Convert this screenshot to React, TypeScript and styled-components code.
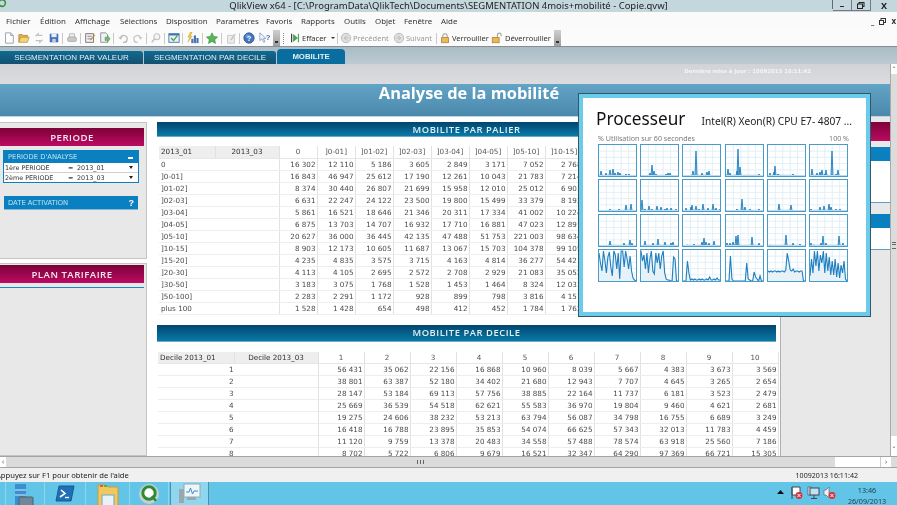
import React from "react";
import styled, { createGlobalStyle } from "styled-components";

const Global = createGlobalStyle`
  html, body { margin: 0; padding: 0; background: #fff; overflow: hidden; }
`;

const Page = styled.div`
  position: relative; width: 897px; height: 505px; overflow: hidden;
  display: flex; flex-direction: column; background: #fff; filter: blur(0.4px);
  font-family: "Noto Sans", "DejaVu Sans", sans-serif; color: #222;
`;
const TitleBar = styled.div`
  position: relative; flex: 0 0 12px; height: 12px; background: #c3d7dd; display: flex; justify-content: center;
  align-items: center; font-size: 9.47px; line-height: 12px; color: #222; white-space: nowrap;
`;
const TitleLogo = styled.svg`position: absolute; left: 0; top: 0;`;
const WindowButtons = styled.div`
  position: absolute; right: 0; top: 0; height: 9px; display: flex; border-left: 1px solid #667;
`;
const WinBtn = styled.div<{ $w: number }>`
  width: ${p => p.$w}px; height: 10px; border-right: 1px solid #778; border-bottom: 1px solid #778;
  display: flex; align-items: center; justify-content: center; font-size: 9px; font-weight: 700; line-height: 9px; color: #222;
  &:last-child { border: 0; }
`;
const MenuBar = styled.div`
  position: relative; flex: 0 0 18px; height: 18px; background: #fafafa; display: flex; align-items: center; padding-left: 6px;
  font-size: 7.9px; color: #333; box-sizing: border-box;
`;
const MenuItem = styled.div<{ $w: number }>`width: ${p => p.$w}px; white-space: nowrap;`;
const DocButtons = styled.div`
  position: absolute; right: 1px; top: 5px; display: flex; align-items: center; gap: 5px; font-size: 8px; line-height: 8px; font-weight: 700; color: #333;
`;
const ToolBar = styled.div`
  flex: 0 0 17px; height: 17px; box-sizing: border-box; background: #fbfbfb; border-bottom: 1px solid #8d8d8d;
  display: flex; align-items: center; padding-left: 1px; font-size: 7.5px; color: #444; white-space: nowrap;
`;
const ToolSlot = styled.div<{ $w?: number }>`
  width: ${p => p.$w ?? 15}px; height: 14px; display: flex; align-items: center; justify-content: center; flex: none;
  svg { width: 12px; height: 12px; opacity: 0.88; }
`;
const ToolSep = styled.div`width: 1px; height: 11px; margin: 0 1px; background: #c9c9c9; flex: none;`;
const Overflow = styled.div`
  width: 7px; height: 16px; flex: none; background: linear-gradient(#cfcfcf, #9d9d9d); position: relative;
  &::after { content: ""; position: absolute; left: 2px; bottom: 3px; width: 3px; height: 2px; background: #333; }
`;
const Grip = styled.div`
  width: 1px; height: 11px; margin: 0 3px; flex: none; border-left: 1px dotted #888;
`;
const ToolText = styled.span<{ $off?: boolean; $w: number }>`
  display: flex; align-items: center; width: ${p => p.$w}px; color: ${p => (p.$off ? "#9a9a9a" : "#333")}; flex: none;
`;
const ToolCaret = styled.span`
  width: 0; height: 0; margin-left: 5px; border-left: 2px solid transparent; border-right: 2px solid transparent; border-top: 2.5px solid #333;
`;
const TabStrip = styled.div`
  flex: 0 0 17px; height: 17px; box-sizing: border-box; background: linear-gradient(#a9bcc6, #bccad2); display: flex; align-items: flex-end;
`;
const Tab = styled.div<{ $w: number; $on?: boolean }>`
  width: ${p => p.$w}px; height: ${p => (p.$on ? 15 : 13)}px; display: flex; align-items: center; justify-content: center; flex: none;
  font-family: "Liberation Sans", sans-serif; font-size: ${p => (p.$on ? 7.8 : 8)}px; white-space: nowrap; box-sizing: border-box;
  font-weight: ${p => (p.$on ? 700 : 400)}; color: #dfeef5;
  border-radius: ${p => (p.$on ? "4px 4px 0 0" : "0 3px 0 0")};
  background: ${p => (p.$on ? "#0a6d9f" : "linear-gradient(#0f6b92, #14506f)")};
  margin-right: ${p => (p.$on ? 0 : 1)}px;
`;
const Workspace = styled.div`flex: 1; min-height: 0; display: flex;`;
const Content = styled.div`flex: 1; min-width: 0; display: flex; flex-direction: column;`;
const GrayBand = styled.div`
  flex: 0 0 20px; box-sizing: border-box; background: linear-gradient(#d2d3d7, #dcdcdf); display: flex; align-items: center; justify-content: flex-end;
  padding: 0 79px 6px 0; font-size: 5.4px; line-height: 8px; font-weight: 700; color: #f5f5f5; white-space: nowrap; font-family: "DejaVu Sans", sans-serif;
`;
const Banner = styled.div`
  flex: 0 0 33px; height: 33px; box-sizing: border-box; background: linear-gradient(#62a4c6, #4b89ac); border-bottom: 1px solid #b9d5e2;
  display: flex; align-items: flex-start; justify-content: center; padding: 0 0 0 48px;
  color: #fff; font-size: 16.4px; line-height: 18px; font-weight: 700; font-family: "Open Sans", sans-serif;
`;
const Main = styled.div`flex: 1; min-height: 0; display: flex; overflow: hidden; background: #fff;`;
const Sidebar = styled.div`
  flex: 0 0 147px; padding-top: 5px; display: flex; flex-direction: column; gap: 4px; box-sizing: border-box;
`;
const SidePanel = styled.div<{ $h: string; $top: number }>`
  height: ${p => p.$h}; flex: ${p => (p.$h === "auto" ? 1 : "none")}; background: #e8e8e8; border: 1px solid #c4c4c4; border-left: 0;
  box-sizing: border-box; padding: ${p => p.$top}px 2px 0 0;
`;
const PinkHead = styled.div<{ $h: number }>`
  height: ${p => p.$h}px; background: linear-gradient(#7d0238, #bc0a62); color: #f8e7ef; font-size: 9.6px; font-weight: 600;
  display: flex; align-items: center; justify-content: center; letter-spacing: 0.5px; font-family: "Open Sans", sans-serif;
`;
const BlueLine = styled.div`height: 1px; margin-top: 4px; background: #1b87c3;`;
const Selector = styled.div`margin: 4px 5px 0 3px; border: 1px solid #0a80c0; border-top: 0; background: #fff; box-sizing: border-box;`;
const BlueBar = styled.div`
  height: 13px; background: #0a80c0; color: #bfe1f2; display: flex; align-items: center; justify-content: space-between;
  padding: 0 4px 0 4px; font-size: 6.8px; font-family: "DejaVu Sans", sans-serif;
`;
const Dash = styled.span`width: 5px; height: 1.5px; background: #fff; margin: 3px 1px 0 0;`;
const Help = styled.span`color: #fff; font-size: 9px; font-weight: 700; font-family: "Liberation Sans", sans-serif;`;
const SelectorRow = styled.div`
  height: 10px; box-sizing: border-box; display: grid; grid-template-columns: 63px 9px 1fr 9px; align-items: center; padding-left: 1px;
  font-size: 6.4px; color: #333; border-bottom: 1px solid #cfcfcf; font-family: "DejaVu Sans", sans-serif; white-space: nowrap;
  &:last-child { border-bottom: 0; height: 9px; }
`;
const Caret = styled.span`
  width: 0; height: 0; border-left: 2.5px solid transparent; border-right: 2.5px solid transparent; border-top: 3px solid #222;
`;
const DateBar = styled(BlueBar)`margin: 13px 6px 0 4px; box-shadow: 0 1px 0 #7fb8d8;`;
const Center = styled.div`
  flex: 0 0 634px; min-width: 0; box-sizing: border-box; padding: 5px 5px 0 10px; background: #fff; border-right: 1px solid #aeb0b2;
`;
const SectionHead = styled.div<{ $h: number; $mt?: number }>`
  height: ${p => p.$h}px; margin: ${p => p.$mt ?? 0}px -1px 0 0; background: linear-gradient(#00456d, #0a7aa8); color: #dff0f7;
  display: flex; align-items: center; justify-content: center; font-size: 9.4px; font-weight: 600; letter-spacing: 0.55px;
  font-family: "Open Sans", sans-serif; border-bottom: 1px solid #6ba9c6; box-sizing: border-box;
`;
const TableWrap = styled.div<{ $left: number; $mt: number }>`
  margin: ${p => p.$mt}px 0 0 ${p => p.$left}px;
`;
const DataTable = styled.table<{ $w: number }>`
  width: ${p => p.$w}px; table-layout: fixed; border-collapse: collapse; font-family: "DejaVu Sans", sans-serif;
  font-size: 7.2px; color: #4a4a4a;
`;
const Th = styled.th<{ $dim?: boolean; $left?: boolean }>`
  height: 12px; padding: 0 2px; font-weight: 400; font-size: 7.2px; line-height: 11px; text-align: ${p => (p.$left ? "left" : "center")};
  color: ${p => (p.$dim ? "#2e2e2e" : "#555")};
  background: ${p => (p.$dim ? "#eeeeee" : "#fff")}; border-right: 1px solid #e2e2e2; border-bottom: 1px solid #e6e6e6; white-space: nowrap; overflow: hidden;
  box-sizing: border-box;
`;
const Td = styled.td<{ $label?: boolean; $merged?: boolean }>`
  height: 12px; padding: 0 1px 0 2px; line-height: 11px; box-sizing: border-box; white-space: nowrap; overflow: hidden; color: #4a4a4a;
  text-align: ${p => (p.$label ? "left" : "right")}; border-bottom: 1px solid #eeeeee; border-right: 1px solid #e2e2e2;
  ${p => (p.$merged ? "text-align: right; padding-right: 84px;" : "")}
`;
const RightCol = styled.div`flex: 1; min-width: 0; padding-top: 5px; background: #e8e8e8; display: flex; flex-direction: column;`;
const RightPink = styled.div`height: 19px; background: linear-gradient(#7d0238, #bc0a62);`;
const RightBlue = styled.div<{ $mt: number }>`height: 14px; margin-top: ${p => p.$mt}px; background: #0a80c0;`;
const RightWhite = styled.div<{ $h: number }>`height: ${p => p.$h}px; background: #fff; border-bottom: 1px solid #5a9fc4;`;
const VScroll = styled.div`
  flex: 0 0 7px; box-sizing: border-box; border-left: 1px solid #aaa; background: #dcdcdc; display: flex; flex-direction: column; align-items: center;
`;
const ScrollCap = styled.div<{ $h: number }>`
  height: ${p => p.$h}px; width: 100%; background: #fff; flex: none; font-size: 6px; line-height: ${p => p.$h}px; text-align: center; color: #555; overflow: hidden;
`;
const ScrollThumb = styled.div`flex: 1; width: 100%; display: flex; align-items: center; justify-content: center; padding-bottom: 20px; box-sizing: border-box;`;
const GripH = styled.div`width: 4px; height: 5px; border-top: 1px solid #666; border-bottom: 1px solid #666; position: relative;
  &::after { content: ""; position: absolute; left: 0; right: 0; top: 1.5px; height: 1px; background: #666; }
`;
const HScroll = styled.div`
  flex: 0 0 12px; box-sizing: border-box; background: #dbdbdb; border-top: 1px solid #a4a4a4; border-bottom: 1px solid #a4a4a4; display: flex; align-items: stretch;
`;
const HEnd = styled.div`width: 6px; background: #fff; font-size: 7px; line-height: 10px; text-align: center; color: #555; flex: none;`;
const HThumb = styled.div`flex: 0 0 829px; display: flex; align-items: center; justify-content: center;`;
const GripV = styled.div`width: 5px; height: 4px; border-left: 1px solid #666; border-right: 1px solid #666; position: relative;
  &::after { content: ""; position: absolute; top: 0; bottom: 0; left: 1.5px; width: 1px; background: #666; }
`;
const HTrack = styled.div`flex: 0 0 45px; background: #fff;`;
const HArrow = styled.div`flex: 0 0 11px; background: #fff; border-left: 1px solid #ccc; font-size: 7px; line-height: 10px; text-align: center; color: #555; box-sizing: border-box;`;
const StatusBar = styled.div`
  flex: 0 0 14px; background: #f0f0f0; display: flex; align-items: center; justify-content: space-between; font-size: 7.6px; color: #222;
  padding: 0 39px 0 0; white-space: nowrap; font-family: "Noto Sans", sans-serif; overflow: hidden;
`;
const StatusHelp = styled.span`margin-left: -4px;`;
const StatusTime = styled.span`font-size: 7.1px;`;
const Taskbar = styled.div`
  flex: 0 0 23px; background: #62c5e8; display: flex; align-items: stretch; overflow: hidden; position: relative; padding-left: 5px;
`;
const TaskCell = styled.div<{ $w: number; $on?: boolean }>`
  width: ${p => p.$w}px; flex: none; box-sizing: border-box; display: flex; align-items: flex-start; justify-content: center; padding-top: 1px;
  border-left: 1px solid ${p => (p.$on ? "#4f8ea8" : "#8cd6ef")}; 
  ${p => (p.$on ? "background: #8fd6ef; border-right: 1px solid #4f8ea8;" : "")}
`;
const Tray = styled.div`
  margin-left: auto; display: flex; align-items: flex-start; padding: 3px 4px 0 0;
`;
const TrayIcon = styled.div`width: 16.5px; height: 14px; display: flex; justify-content: center; align-items: center; flex: none;`;
const Clock = styled.div`
  width: 52px; margin-left: 3px; text-align: center; font-size: 7.2px; line-height: 11px; color: #1e3a48; white-space: nowrap;
`;
const ClockLine = styled.div`height: 11px;`;

/* processor window */
const ProcWindow = styled.div`
  position: absolute; left: 578px; top: 93px; width: 293px; height: 224px; box-sizing: border-box;
  border: 1px solid #33566a; background: #fff; box-shadow: inset 0 0 0 4px #6bcbea; padding: 13px 21px 0 19px;
`;
const ProcHead = styled.div`display: flex; align-items: baseline; justify-content: space-between; height: 21px;`;
const ProcTitle = styled.div`font-size: 17.2px; color: #111; font-family: "Noto Sans", sans-serif; line-height: 24px; margin-left: -2px;`;
const ProcCpu = styled.div`font-size: 10.2px; color: #222; white-space: nowrap; font-family: "Noto Sans", sans-serif; margin-right: -3px;`;
const ProcCaption = styled.div`
  display: flex; justify-content: space-between; margin-top: 5px; height: 10px; line-height: 10px; font-size: 7.1px; color: #7a7a7a;
`;
const CpuGrid = styled.div`
  display: grid; grid-template-columns: repeat(6, 39px); grid-auto-rows: 33px; column-gap: 3.2px; row-gap: 2px; margin-top: 1px;
`;
const CpuBox = styled.svg`display: block; border: 1px solid #4a9bc8; box-sizing: border-box; width: 39px; height: 33px; background: #fff;`;

const palierHead = ["0", "]0-01]", "]01-02]", "]02-03]", "]03-04]", "]04-05]", "]05-10]", "]10-15]"];
const palier: [string, ...string[]][] = [
  ["0", "16 302", "12 110", "5 186", "3 605", "2 849", "3 171", "7 052", "2 768"],
  ["]0-01]", "16 843", "46 947", "25 612", "17 190", "12 261", "10 043", "21 783", "7 214"],
  ["]01-02]", "8 374", "30 440", "26 807", "21 699", "15 958", "12 010", "25 012", "6 903"],
  ["]02-03]", "6 631", "22 247", "24 122", "23 500", "19 800", "15 499", "33 379", "8 192"],
  ["]03-04]", "5 861", "16 521", "18 646", "21 346", "20 311", "17 334", "41 002", "10 224"],
  ["]04-05]", "6 875", "13 703", "14 707", "16 932", "17 710", "16 881", "47 023", "12 891"],
  ["]05-10]", "20 627", "36 000", "36 445", "42 135", "47 488", "51 753", "221 003", "98 634"],
  ["]10-15]", "8 903", "12 173", "10 605", "11 687", "13 067", "15 703", "104 378", "99 105"],
  ["]15-20]", "4 235", "4 835", "3 575", "3 715", "4 163", "4 814", "36 277", "54 421"],
  ["]20-30]", "4 113", "4 105", "2 695", "2 572", "2 708", "2 929", "21 083", "35 052"],
  ["]30-50]", "3 183", "3 075", "1 768", "1 528", "1 453", "1 464", "8 324", "12 033"],
  ["]50-100]", "2 283", "2 291", "1 172", "928", "899", "798", "3 816", "4 157"],
  ["plus 100", "1 528", "1 428", "654", "498", "412", "452", "1 784", "1 762"],
];
const decile: string[][] = [
  ["56 431", "35 062", "22 156", "16 868", "10 960", "8 039", "5 667", "4 383", "3 673", "3 569"],
  ["38 801", "63 387", "52 180", "34 402", "21 680", "12 943", "7 707", "4 645", "3 265", "2 654"],
  ["28 147", "53 184", "69 113", "57 756", "38 885", "22 164", "11 737", "6 181", "3 523", "2 479"],
  ["25 669", "36 539", "54 518", "62 621", "55 583", "36 970", "19 804", "9 460", "4 621", "2 681"],
  ["19 275", "24 606", "38 232", "53 213", "63 794", "56 087", "34 798", "16 755", "6 689", "3 249"],
  ["16 418", "16 788", "23 895", "35 853", "54 074", "66 625", "57 343", "32 013", "11 783", "4 459"],
  ["11 120", "9 759", "13 378", "20 483", "34 558", "57 488", "78 574", "63 918", "25 560", "7 186"],
  ["8 702", "5 722", "6 806", "9 679", "16 521", "32 347", "64 290", "97 369", "66 721", "15 305"],
];

const menus: [string, number][] = [
  ["Fichier", 34], ["Édition", 35], ["Affichage", 45], ["Sélections", 46], ["Disposition", 50], ["Paramètres", 50],
  ["Favoris", 35], ["Rapports", 43], ["Outils", 31], ["Objet", 29], ["Fenêtre", 37], ["Aide", 30],
];

type Spike = [number, number];
const spikes: Spike[][] = [
  [[2,5],[7,3],[11,6],[14,7],[16,3],[19,4],[21,3],[27,2],[30,2]],
  [[9,3],[11,11],[13,5],[15,2],[25,2],[27,3],[29,3]],
  [[10,5],[13,25],[19,3],[24,4],[26,5]],
  [[2,7],[4,3],[11,5],[12,27],[14,9],[33,2]],
  [[2,3],[6,4],[7,10],[10,2],[12,1],[25,2]],
  [[2,7],[7,3],[10,4],[12,6],[15,2],[16,6],[22,25],[26,2],[28,6]],
  [[11,2],[20,2],[27,6],[32,7]],
  [[1,11],[4,2],[8,5],[11,2],[16,5],[20,4],[24,2],[26,3],[30,3],[35,2]],
  [[3,3],[8,4],[9,6],[13,5],[16,2],[20,7],[25,3],[30,7],[33,3],[37,2]],
  [[11,2],[16,12],[19,4],[24,2],[33,2]],
  [[11,7],[23,6]],
  [[1,2],[10,4],[14,5],[19,7],[21,4],[26,2],[30,2]],
  [[11,5],[25,3],[31,6],[33,3]],
  [[4,5],[12,3],[17,7],[24,4],[30,3],[32,4]],
  [[4,1],[11,2],[19,4],[21,8],[23,4],[26,3],[31,5]],
  [[1,3],[4,3],[7,4],[10,10],[12,11],[26,9],[33,3]],
  [[2,1],[18,11],[25,3],[32,2]],
  [[1,3],[4,1],[11,3],[13,10],[16,3],[29,10],[33,3]],
];
const dense: number[][] = [
  [28,18,10,30,20,8,24,29,14,5,30,26,12,28,2,30,31,14,30,22,12,25,10,3,1,0],
  [30,20,26,12,28,8,22,30,10,7,28,18,28,12,25,30,8,2,1,1,0,0,24,22,0,0],
  [0,0,0,20,8,1,2,1,2,1,1,2,1,2,1,1,2,1,4,1,1,2,1,3,1,1],
  [0,0,0,25,2,0,0,0,0,0,0,0,0,0,18,2,1,0,0,9,4,2,0,5,0,0],
  [10,9,10,9,10,10,9,10,9,10,10,9,11,28,20,11,10,12,9,10,10,9,10,10,0,0],
  [5,22,8,30,15,31,10,26,18,30,8,28,10,24,6,20,6,22,4,18,3,16,8,20,2,0],
];

const H = 31;
function spikePoints(s: Spike[]) {
  const pts: string[] = [`0,${H}`];
  s.forEach(([x, h]) => pts.push(`${x - 1},${H - 0.6}`, `${x},${H - h}`, `${x + 1},${H - 0.6}`));
  pts.push(`37,${H}`);
  return pts.join(" ");
}
function densePoints(d: number[]) {
  return d.map((v, i) => `${(i * 37) / 25},${H - Math.min(v, 30)}`).join(" ");
}

function Grid() {
  const xs = [7.4, 14.8, 22.2, 29.6];
  const ys = [6.2, 12.4, 18.6, 24.8];
  return (
    <g stroke="#dcecf5" strokeWidth="0.8">
      {xs.map(x => <line key={x} x1={x} x2={x} y1={0} y2={H} />)}
      {ys.map(y => <line key={y} y1={y} y2={y} x1={0} x2={37} />)}
    </g>
  );
}
function CpuChart({ s, d }: { s?: Spike[]; d?: number[] }) {
  const pts = s ? spikePoints(s) : densePoints(d!);
  return (
    <CpuBox viewBox="0 0 37 31" preserveAspectRatio="none">
      <Grid />
      {s ? (
        <>
          <polygon points={pts} fill="#8cc4e4" stroke="none" />
          <polyline points={pts} fill="none" stroke="#1f7fc0" strokeWidth="0.9" />
          <rect x="0" y={H - 1} width="37" height="1" fill="#bcdcec" />
        </>
      ) : (
        <>
          <polygon points={`0,${H} ${pts} 37,${H}`} fill="#e6f1f8" />
          <polyline points={pts} fill="none" stroke="#1f7fc0" strokeWidth="1.1" />
        </>
      )}
    </CpuBox>
  );
}

function Ico({ k }: { k: string }) {
  const p = { width: 14, height: 14, viewBox: "0 0 14 14" };
  switch (k) {
    case "new": return <svg {...p}><path d="M3 1h6l3 3v9H3z" fill="#fff" stroke="#7c8b9a" /><path d="M9 1v3h3" fill="#dde" stroke="#7c8b9a" /></svg>;
    case "open": return <svg {...p}><path d="M1 12V3h4l1 1h5v2" fill="#e0ac3c" stroke="#a87a20" /><path d="M1 12l2-6h10l-2 6z" fill="#f4cf62" stroke="#a87a20" strokeWidth=".8" /></svg>;
    case "reload": return <svg {...p}><path d="M3 5l3-3v2h5M11 9l-3 3v-2H3" fill="none" stroke="#bbb" strokeWidth="1.5" /></svg>;
    case "save": return <svg {...p}><rect x="2" y="2" width="10" height="10" fill="#2f5fb0" /><rect x="4" y="2" width="6" height="4" fill="#e8eefc" /><rect x="5" y="8" width="4" height="4" fill="#bcd" /></svg>;
    case "print": return <svg {...p}><path d="M4 2h6v4H4z" fill="#eee" stroke="#aaa" /><rect x="2" y="6" width="10" height="5" rx="1" fill="#c2c2c2" stroke="#a0a0a0" /></svg>;
    case "edit": return <svg {...p}><rect x="2" y="2" width="9" height="10" fill="#f2f2ee" stroke="#556" /><path d="M4 5h5M4 8h5" stroke="#667" /><path d="M7 9l5-6 1 1-5 6z" fill="#c77a22" /></svg>;
    case "export": return <svg {...p}><path d="M2 1h6l2 2v9H2z" fill="#eef1ee" stroke="#778" /><path d="M7 6h3V4l3 4-3 4v-2H7z" fill="#5fae5a" stroke="#3c7f3a" strokeWidth=".5" /></svg>;
    case "undo": return <svg {...p}><path d="M4 7a4 4 0 1 1 3 5" fill="none" stroke="#b5b5b5" strokeWidth="1.6" /><path d="M1.5 6h5l-2.5 3z" fill="#b5b5b5" /></svg>;
    case "redo": return <svg {...p}><path d="M10 7a4 4 0 1 0-3 5" fill="none" stroke="#c4c4c4" strokeWidth="1.6" /><path d="M12.5 6h-5l2.5 3z" fill="#c4c4c4" /></svg>;
    case "search": return <svg {...p}><circle cx="8" cy="5.5" r="3.5" fill="#f4f4f4" stroke="#bbb" strokeWidth="1.2" /><path d="M5.5 8L2 12" stroke="#bbb" strokeWidth="1.8" /></svg>;
    case "check": return <svg {...p}><rect x="1" y="2" width="12" height="10" fill="#e9eef4" stroke="#2b5f9e" /><rect x="1" y="2" width="12" height="2" fill="#2b5f9e" /><path d="M3.5 7l3 3 4.5-6" fill="none" stroke="#2a9a3a" strokeWidth="1.6" /></svg>;
    case "chart": return <svg {...p}><rect x="5" y="8" width="2.5" height="5" fill="#2f62b0" /><rect x="8" y="4" width="2.5" height="9" fill="#2f62b0" /><rect x="11" y="7" width="2.5" height="6" fill="#2f62b0" /><path d="M4 0L1 6h2l-2 6 5-7H4l2-5z" fill="#f0c020" stroke="#a88510" strokeWidth=".4" /></svg>;
    case "star": return <svg {...p}><path d="M7 1l2 4.2 4.5.6-3.3 3.1.9 4.4L7 11.1l-4 2.2.8-4.4L.5 5.8 5 5.2z" fill="#3fae3c" stroke="#1d7a20" strokeWidth=".7" /></svg>;
    case "tools": return <svg {...p}><path d="M3 4h6l2 2v7H3z" fill="#ececec" stroke="#bbb" /><path d="M6 9l5-7 1.5 1-5 7z" fill="#bbb" /></svg>;
    case "help": return <svg {...p}><circle cx="7" cy="7" r="6" fill="#2a62b8" stroke="#15408a" /><circle cx="5.5" cy="5" r="2.5" fill="#6e9ce0" opacity=".7" /><text x="7" y="10.5" fontSize="9" fontWeight="700" fill="#fff" textAnchor="middle" fontFamily="Liberation Sans">?</text></svg>;
    case "what": return <svg {...p}><path d="M1 1v9l2.5-2 2 4 1.5-.8-2-3.7H8z" fill="#f2f7ff" stroke="#5a7ab0" strokeWidth=".8" /><text x="10.5" y="9" fontSize="9" fontWeight="700" fill="#2a62b8" textAnchor="middle" fontFamily="Liberation Sans">?</text></svg>;
    case "clear": return <svg {...p}><path d="M3 2v10" stroke="#222" strokeWidth="1.3" /><path d="M5 3l5 4-5 4z" fill="#2f9a42" stroke="#1b6c2a" strokeWidth=".6" /><path d="M11 2v10" stroke="#2f9a42" strokeWidth="1.3" /></svg>;
    case "back": return <svg {...p}><circle cx="7" cy="7" r="5.5" fill="#ddd" stroke="#aaa" /><path d="M8 4L5 7l3 3M5 7h5" fill="none" stroke="#aaa" /></svg>;
    case "next": return <svg {...p}><circle cx="7" cy="7" r="5.5" fill="#ddd" stroke="#aaa" /><path d="M6 4l3 3-3 3M9 7H4" fill="none" stroke="#aaa" /></svg>;
    case "lock": return <svg {...p}><path d="M4.5 7V4.5a2.5 2.5 0 0 1 5 0V7" fill="none" stroke="#9a9a9a" strokeWidth="1.3" /><rect x="3" y="6.5" width="8" height="6" fill="#e6b040" stroke="#a87a20" /></svg>;
    case "unlock": return <svg {...p}><path d="M7.5 6V3.5a2.2 2.2 0 0 1 4.4 0V5" fill="none" stroke="#9a9a9a" strokeWidth="1.3" /><rect x="1.5" y="6.5" width="8" height="6" fill="#e6b040" stroke="#a87a20" /></svg>;
    default: return null;
  }
}

function Tool({ k, w }: { k: string; w?: number }) {
  return <ToolSlot $w={w}><Ico k={k} /></ToolSlot>;
}

export default function App() {
  return (
    <Page>
      <Global />
      <TitleBar>
        <TitleLogo width="8" height="8" viewBox="0 0 8 8"><circle cx="2" cy="3" r="3.4" fill="none" stroke="#3e8f3e" strokeWidth="1.6" /></TitleLogo>
        QlikView x64 - [C:\ProgramData\QlikTech\Documents\SEGMENTATION 4mois+mobilité - Copie.qvw]
        <WindowButtons>
          <WinBtn $w={18}>–</WinBtn>
          <WinBtn $w={18}>
            <svg width="8" height="7" viewBox="0 0 8 7"><rect x="2" y="0.5" width="5" height="4" fill="none" stroke="#222" /><rect x="0.5" y="2" width="5" height="4.5" fill="#c3d7dd" stroke="#222" /></svg>
          </WinBtn>
          <WinBtn $w={26}>X</WinBtn>
        </WindowButtons>
      </TitleBar>
      <MenuBar>
        {menus.map(([m, w]) => <MenuItem key={m} $w={w}>{m}</MenuItem>)}
        <DocButtons>
          <span>_</span>
          <svg width="7" height="7" viewBox="0 0 7 7"><rect x="2" y="0.5" width="4.5" height="4" fill="none" stroke="#333" /><rect x="0.5" y="2.5" width="4" height="4" fill="#fafafa" stroke="#333" /></svg>
          <span>x</span>
        </DocButtons>
      </MenuBar>
      <ToolBar>
        <Tool k="new" /><Tool k="open" /><Tool k="reload" /><Tool k="save" /><ToolSep />
        <Tool k="print" /><ToolSep />
        <Tool k="edit" /><Tool k="export" /><ToolSep />
        <Tool k="undo" /><Tool k="redo" /><ToolSep />
        <Tool k="search" /><ToolSep />
        <Tool k="check" /><ToolSep />
        <Tool k="chart" w={17} /><ToolSep />
        <Tool k="star" w={16} /><ToolSep />
        <Tool k="tools" /><ToolSep />
        <Tool k="help" /><Tool k="what" w={17} />
        <Overflow />
        <Grip />
        <Tool k="clear" w={14} />
        <ToolText $w={34}>Effacer<ToolCaret /></ToolText>
        <ToolSep />
        <Tool k="back" w={14} />
        <ToolText $off $w={39}>Précédent</ToolText>
        <Tool k="next" w={14} />
        <ToolText $off $w={29}>Suivant</ToolText>
        <ToolSep />
        <Tool k="lock" w={14} />
        <ToolText $w={37}>Verrouiller</ToolText>
        <Tool k="unlock" w={16} />
        <ToolText $w={49}>Déverrouiller</ToolText>
        <Overflow />
      </ToolBar>
      <TabStrip>
        <Tab $w={143}>SEGMENTATION PAR VALEUR</Tab>
        <Tab $w={132}>SEGMENTATION PAR DECILE</Tab>
        <Tab $w={68} $on>MOBILITE</Tab>
      </TabStrip>
      <Workspace>
        <Content>
          <GrayBand>Dernière mise à jour : 10092013 16:11:42</GrayBand>
          <Banner>Analyse de la mobilité</Banner>
          <Main>
            <Sidebar>
              <SidePanel $h="137px" $top={5}>
                <PinkHead $h={18}>PERIODE</PinkHead>
                <Selector>
                  <BlueBar>PERIODE D'ANALYSE<Dash /></BlueBar>
                  <SelectorRow><span>1ère PERIODE</span><span>=</span><span>2013_01</span><Caret /></SelectorRow>
                  <SelectorRow><span>2ème PERIODE</span><span>=</span><span>2013_03</span><Caret /></SelectorRow>
                </Selector>
                <DateBar>DATE ACTIVATION<Help>?</Help></DateBar>
              </SidePanel>
              <SidePanel $h="auto" $top={1}>
                <PinkHead $h={18}>PLAN TARIFAIRE</PinkHead>
                <BlueLine />
              </SidePanel>
            </Sidebar>
            <Center>
              <SectionHead $h={15}>MOBILITE PAR PALIER</SectionHead>
              <TableWrap $left={2} $mt={9}>
                <DataTable $w={424}>
                  <colgroup>
                    <col style={{ width: 56 }} /><col style={{ width: 64 }} />
                    {palierHead.map(h => <col key={h} style={{ width: 38 }} />)}
                  </colgroup>
                  <thead>
                    <tr>
                      <Th $dim $left>2013_01</Th><Th $dim>2013_03</Th>
                      {palierHead.map(h => <Th key={h}>{h}</Th>)}
                    </tr>
                  </thead>
                  <tbody>
                    {palier.map(r => (
                      <tr key={r[0]}>
                        <Td $label colSpan={2}>{r[0]}</Td>
                        {r.slice(1).map((v, i) => <Td key={i}>{v}</Td>)}
                      </tr>
                    ))}
                  </tbody>
                </DataTable>
              </TableWrap>
              <SectionHead $h={17} $mt={10}>MOBILITE PAR DECILE</SectionHead>
              <TableWrap $left={1} $mt={10}>
                <DataTable $w={620}>
                  <colgroup>
                    <col style={{ width: 76 }} /><col style={{ width: 84 }} />
                    {decile[0].map((_, i) => <col key={i} style={{ width: 46 }} />)}
                  </colgroup>
                  <thead>
                    <tr>
                      <Th $dim $left>Decile 2013_01</Th><Th $dim>Decile 2013_03</Th>
                      {decile[0].map((_, i) => <Th key={i}>{i + 1}</Th>)}
                    </tr>
                  </thead>
                  <tbody>
                    {decile.map((r, i) => (
                      <tr key={i}>
                        <Td $merged colSpan={2}>{i + 1}</Td>
                        {r.map((v, j) => <Td key={j}>{v}</Td>)}
                      </tr>
                    ))}
                  </tbody>
                </DataTable>
              </TableWrap>
            </Center>
            <RightCol>
              <RightPink />
              <RightBlue $mt={6} />
              <RightWhite $h={41} />
              <RightBlue $mt={11} />
              <RightWhite $h={21} />
            </RightCol>
          </Main>
        </Content>
        <VScroll>
          <ScrollCap $h={10}>⌃</ScrollCap>
          <ScrollThumb><GripH /></ScrollThumb>
          <ScrollCap $h={20}>⌄</ScrollCap>
        </VScroll>
      </Workspace>
      <HScroll>
        <HEnd>‹</HEnd>
        <HThumb><GripV /></HThumb>
        <HTrack />
        <HArrow>›</HArrow>
      </HScroll>
      <StatusBar>
        <StatusHelp>Appuyez sur F1 pour obtenir de l'aide</StatusHelp>
        <StatusTime>10092013 16:11:42</StatusTime>
      </StatusBar>
      <Taskbar>
        <TaskCell $w={39}>
          <svg width="24" height="22" viewBox="0 0 24 22"><rect x="2" y="1" width="11" height="21" fill="#3a8fd0" /><path d="M2 7h11M2 12h11" stroke="#cfe8f8" /><rect x="6" y="14" width="14" height="9" rx="1" fill="#6f8796" stroke="#48606e" /></svg>
        </TaskCell>
        <TaskCell $w={41}>
          <svg width="20" height="18" viewBox="0 0 20 18" style={{ marginTop: 2 }}><path d="M4 1h15l-3 15H1z" fill="#1f6fb5" stroke="#155a96" /><path d="M6 5l4 3.5-5 3.5" fill="none" stroke="#fff" strokeWidth="1.6" /><path d="M10 12.5h4" stroke="#fff" strokeWidth="1.4" /></svg>
        </TaskCell>
        <TaskCell $w={44}>
          <svg width="22" height="22" viewBox="0 0 22 22"><path d="M1 2h8l2 2h10v20H1z" fill="#f0c85e" stroke="#c89c38" /><path d="M3 2h3v2H3z" fill="#e05a4a" /><path d="M7 2h3v2H7z" fill="#5ab04a" /><rect x="5" y="12" width="12" height="11" fill="#e8f2f8" stroke="#6fa7c8" /></svg>
        </TaskCell>
        <TaskCell $w={39}>
          <svg width="22" height="22" viewBox="0 0 22 22"><circle cx="11" cy="11" r="10" fill="#c8cfd0" /><circle cx="11" cy="10" r="6.2" fill="#fff" stroke="#2e8b36" strokeWidth="3" /><path d="M14 13l4 5" stroke="#2e8b36" strokeWidth="2.5" /></svg>
        </TaskCell>
        <TaskCell $w={2}>{null}</TaskCell>
        <TaskCell $w={39} $on>
          <svg width="24" height="21" viewBox="0 0 24 21"><rect x="1" y="6" width="5" height="14" fill="#9aa8ae" /><rect x="6" y="1" width="16" height="13" fill="#eef6fa" stroke="#98a8b0" /><path d="M8 9h3l1.5-4 2 6 1.5-3h4" fill="none" stroke="#3a8fc8" /><rect x="9" y="14" width="9" height="3" fill="#98a8b0" /></svg>
        </TaskCell>
        <Tray>
          <TrayIcon><svg width="7" height="4" viewBox="0 0 7 4"><path d="M0 4l3.5-4L7 4z" fill="#111" /></svg></TrayIcon>
          <TrayIcon>
            <svg width="13" height="13" viewBox="0 0 13 13"><path d="M2 1h8v8H2zM2 1v12" fill="#fff" stroke="#445" /><circle cx="9" cy="9.5" r="3.4" fill="#d8303c" /><path d="M7.5 8l3 3m0-3l-3 3" stroke="#fff" /></svg>
          </TrayIcon>
          <TrayIcon>
            <svg width="13" height="13" viewBox="0 0 13 13"><rect x="1" y="1" width="3" height="8" fill="#dfe8ec" stroke="#445" strokeWidth=".6" /><rect x="3" y="2" width="9" height="7" fill="#bfe3f2" stroke="#445" /><path d="M7 9v3M4 12.5h6" stroke="#445" /></svg>
          </TrayIcon>
          <TrayIcon>
            <svg width="13" height="13" viewBox="0 0 13 13"><path d="M1 4h2l3-3v11L3 9H1z" fill="#f2f2f2" stroke="#667" strokeWidth=".7" /><circle cx="9" cy="9.5" r="3.4" fill="#d8303c" /><path d="M7.5 8l3 3m0-3l-3 3" stroke="#fff" /></svg>
          </TrayIcon>
          <Clock><ClockLine>13:46</ClockLine><ClockLine>26/09/2013</ClockLine></Clock>
        </Tray>
      </Taskbar>
      <ProcWindow>
        <ProcHead>
          <ProcTitle>Processeur</ProcTitle>
          <ProcCpu>Intel(R) Xeon(R) CPU E7- 4807 ...</ProcCpu>
        </ProcHead>
        <ProcCaption><span>% Utilisation sur 60 secondes</span><span>100 %</span></ProcCaption>
        <CpuGrid>
          {spikes.map((s, i) => <CpuChart key={i} s={s} />)}
          {dense.map((d, i) => <CpuChart key={"d" + i} d={d} />)}
        </CpuGrid>
      </ProcWindow>
    </Page>
  );
}
